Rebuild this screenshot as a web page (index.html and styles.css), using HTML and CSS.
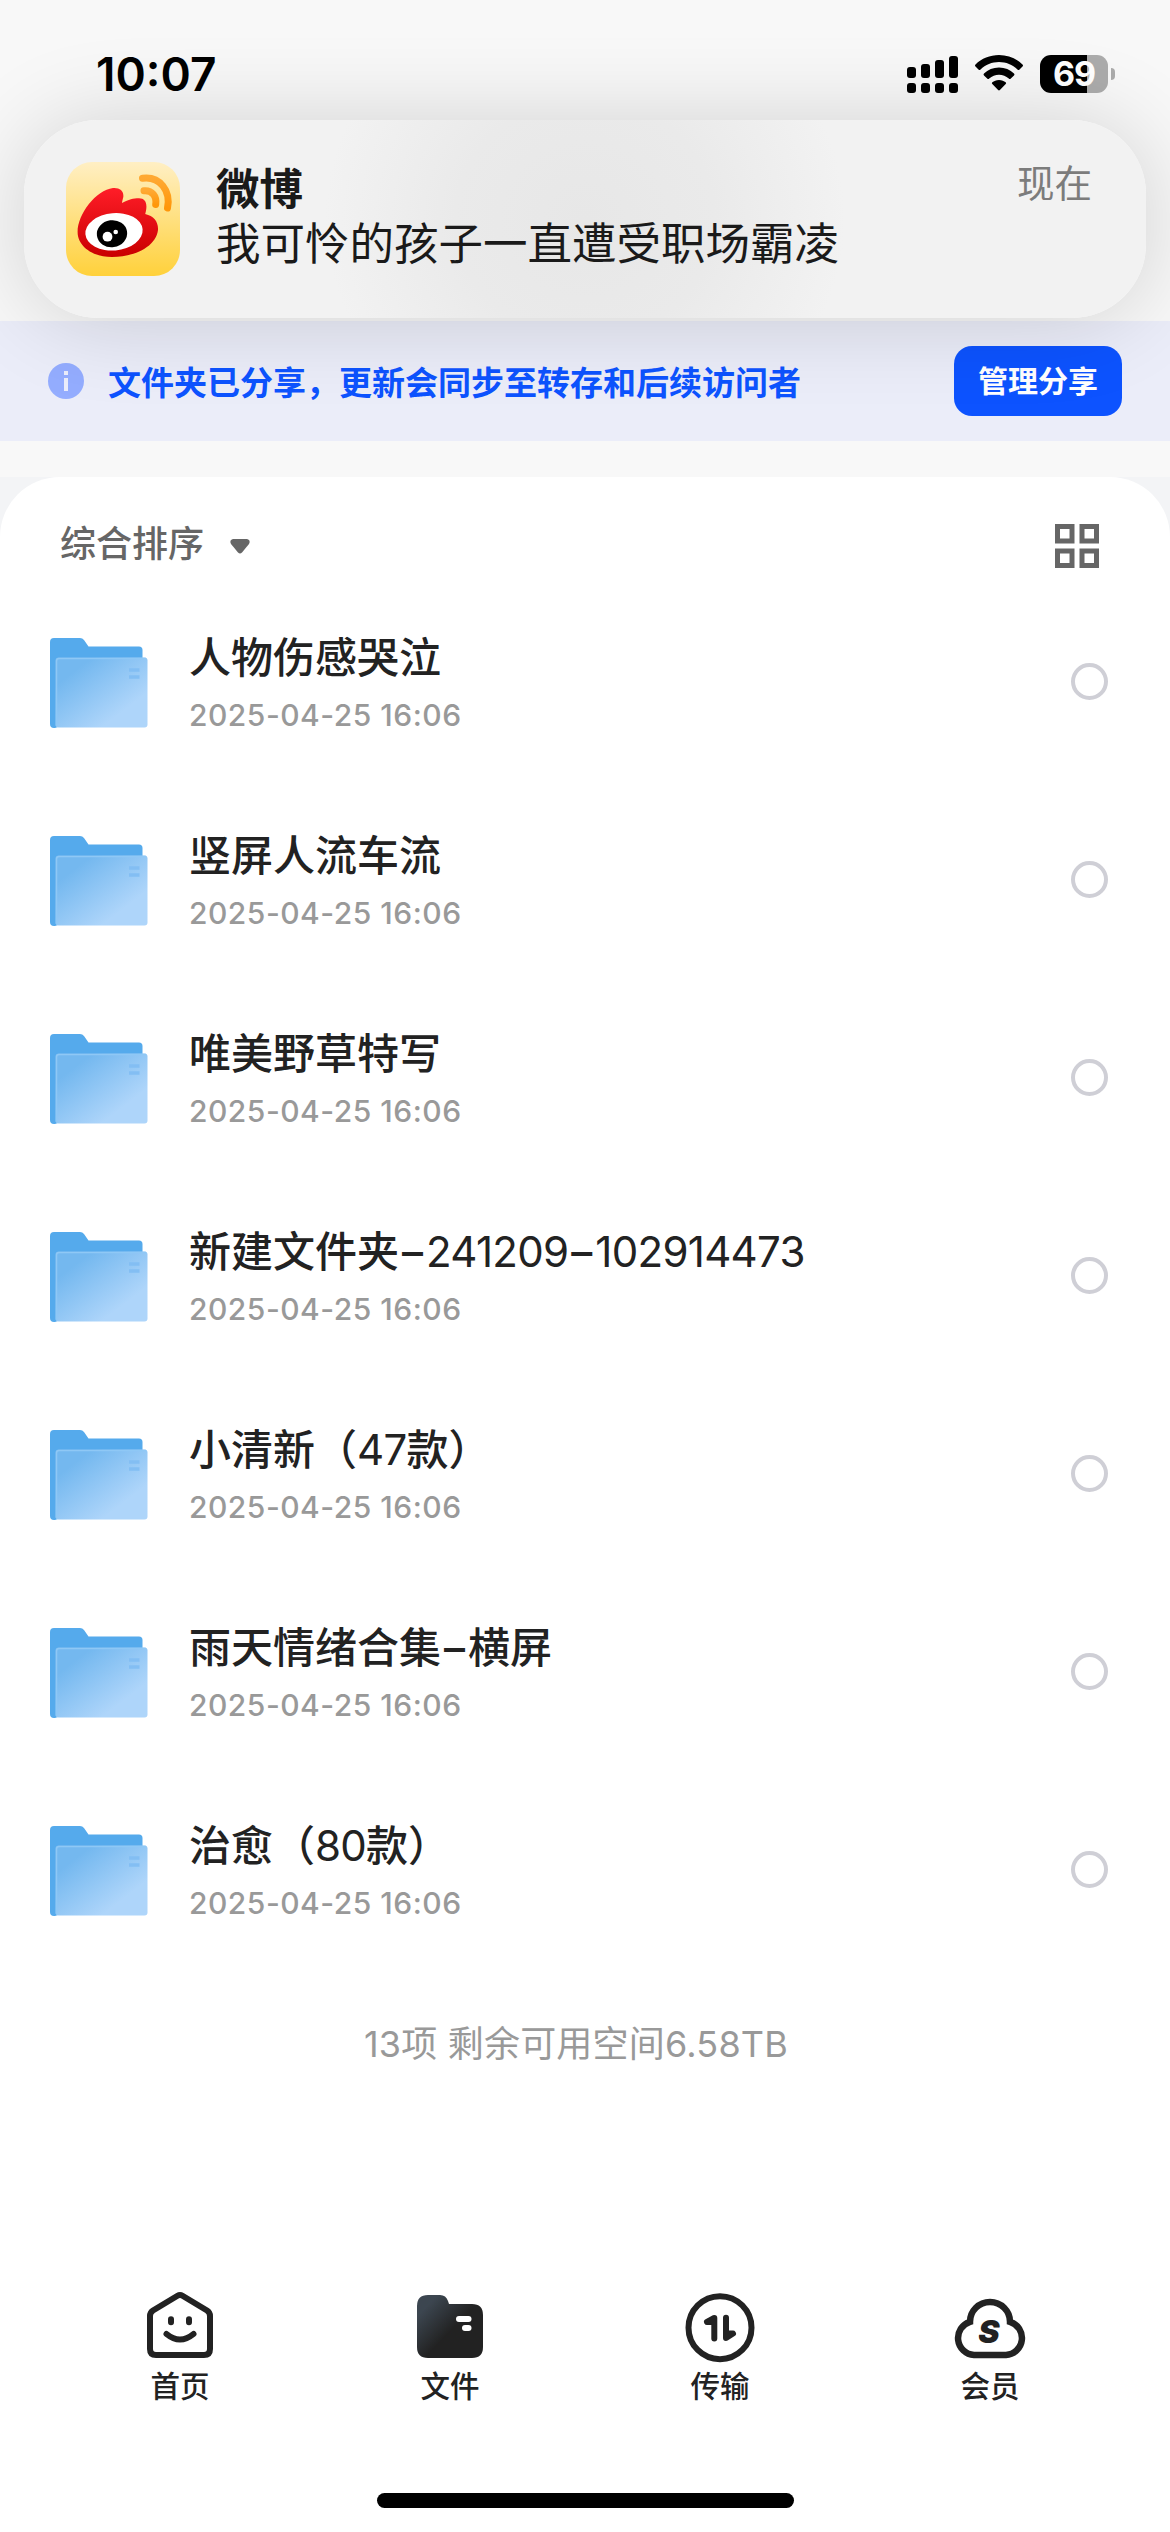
FILE: index.html
```html
<!DOCTYPE html>
<html lang="zh-CN">
<head>
  <meta charset="UTF-8" />
  <meta name="viewport" content="width=device-width, initial-scale=1.0"/>
  <title>文件</title>
  <link rel="stylesheet" href="styles.css">
</head>
<body>
  <!-- shared icons -->
  <svg class="sprite" width="0" height="0">
    <defs>
      <linearGradient id="folder-front" x1="0" y1="0" x2="1" y2="1">
        <stop offset="0.2" stop-color="#74b8ef"/>
        <stop offset="0.75" stop-color="#aed5fa"/>
      </linearGradient>
      <linearGradient id="tab-folder" x1="0" y1="0.1" x2="0.6" y2="0.65">
        <stop offset="0.2" stop-color="#3c4650"/>
        <stop offset="0.85" stop-color="#222"/>
      </linearGradient>
      <linearGradient id="weibo-red" x1="0" y1="0" x2="0" y2="1">
        <stop offset="0" stop-color="#ff1d28"/>
        <stop offset="1" stop-color="#c90000"/>
      </linearGradient>
      <linearGradient id="weibo-wave" x1="0" y1="0" x2="0" y2="1">
        <stop offset="0" stop-color="#ffa933"/>
        <stop offset="1" stop-color="#ff970a"/>
      </linearGradient>
    </defs>
    <symbol id="folder" viewBox="0 0 98 90">
      <path d="M4 0H30Q32.500 0 34 2L38.500 8.500H89Q92.500 8.500 92.500 12V60L5 90H4Q0 90 0 86V4Q0 0 4 0Z" fill="#55aaec"/>
      <rect x="5.500" y="19.500" width="92" height="70" rx="3" fill="url(#folder-front)"/>
      <path d="M6.500 88V23Q6.500 20.500 9 20.500H96" fill="none" stroke="#8fc8f5" stroke-width="1.500"/>
      <path d="M79 32H89.500M79 39H89.500" stroke="#83bef3" stroke-width="3.500"/>
    </symbol>
  </svg>

  <header class="status-bar">
    <span class="clock">10:07</span>
    <div class="status-icons">
      <svg width="51" height="38" viewBox="0 0 51 38">
        <rect x="0" y="12" width="9" height="11" rx="3"/>
        <rect x="14" y="9" width="9" height="14" rx="3"/>
        <rect x="28" y="5" width="9" height="18" rx="3"/>
        <rect x="42" y="1" width="9" height="22" rx="3"/>
        <rect x="0" y="28" width="9" height="10" rx="3"/>
        <rect x="14" y="28" width="9" height="10" rx="3"/>
        <rect x="28" y="28" width="9" height="10" rx="3"/>
        <rect x="42" y="28" width="9" height="10" rx="3"/>
      </svg>
      <svg class="wifi" width="48" height="36" viewBox="0 0 48 36">
        <path d="M24 0C33 0 41.500 3.500 47.500 9.500Q48.500 10.500 47.500 11.500L44.500 14.500Q43.500 15.500 42.500 14.500C37.500 9.700 31 7 24 7S10.500 9.700 5.500 14.500Q4.500 15.500 3.500 14.500L0.500 11.500Q-0.500 10.500 0.500 9.500C6.500 3.500 15 0 24 0Z"/>
        <path d="M24 12.500C30 12.500 35 14.800 39 18.500Q40 19.500 39 20.500L35.800 23.600Q34.800 24.600 33.800 23.600C31 21.200 27.700 19.800 24 19.800S17 21.200 14.200 23.600Q13.200 24.600 12.200 23.600L9 20.500Q8 19.500 9 18.500C13 14.800 18 12.500 24 12.500Z"/>
        <path d="M24 25C26.800 25 29 26 30.700 27.300Q31.600 28.200 30.700 29.100L24.900 35Q24 35.900 23.100 35L17.300 29.100Q16.400 28.200 17.300 27.300C19 26 21.200 25 24 25Z"/>
      </svg>
      <div class="battery">69</div>
    </div>
  </header>

  <section class="notification">
    <svg class="app-icon" width="114" height="114" viewBox="0 0 114 114">
      <path d="M11.600 70C11.600 52 30 28 47 26C54 25.500 58 29 57.300 35Q56 40 56 41C63 37.500 67 36.300 73 36.300C80 36.500 82 42 79.200 52C88 54 92.500 60 92 68C90 85 68 95 46 95C26 95 11.600 84 11.600 70Z" fill="url(#weibo-red)"/>
      <ellipse cx="48" cy="69.800" rx="28.700" ry="18.700" transform="rotate(-5 48 69.800)" fill="#fff"/>
      <ellipse cx="46" cy="71.700" rx="15.200" ry="13.500" transform="rotate(-8 46 71.700)"/>
      <circle cx="41.500" cy="74.700" r="4.900" fill="#fff"/>
      <circle cx="49.700" cy="70" r="2.300" fill="#fff"/>
      <g fill="none" stroke="url(#weibo-wave)" stroke-width="7" stroke-linecap="round">
        <path d="M76.500 16.300C94 14 105 29 101.500 46"/>
        <path d="M78 28.700C86 28 91 34 89.700 42.500"/>
      </g>
    </svg>
    <div class="message">
      <strong>微博</strong>
      <p>我可怜的孩子一直遭受职场霸凌</p>
    </div>
    <time class="when">现在</time>
  </section>

  <section class="share-bar">
    <svg width="36" height="36" viewBox="0 0 36 36">
      <circle cx="18" cy="18" r="18" fill="#94adff"/>
      <path d="M16 8h4v4h-4zM16 15h4v13h-4z" fill="#ebedfb"/>
    </svg>
    <p>文件夹已分享，更新会同步至转存和后续访问者</p>
    <button class="manage">管理分享</button>
  </section>

  <div class="panel-wrap">
    <main class="panel">
      <div class="toolbar">
        <span>综合排序</span>
        <svg class="caret" width="20" height="15" viewBox="0 0 20 15"><path d="M3 0H17Q21 1 19 5L12 13.500Q10 15.500 8 13.500L1 5Q-1 1 3 0Z" fill="#666"/></svg>
        <svg class="grid-icon" width="44" height="44" viewBox="0 0 44 44" fill="none" stroke="#666" stroke-width="5">
          <rect x="2.500" y="2.500" width="14.500" height="14.500"/>
          <rect x="27" y="2.500" width="14.500" height="14.500"/>
          <rect x="2.500" y="27" width="14.500" height="14.500"/>
          <rect x="27" y="27" width="14.500" height="14.500"/>
        </svg>
      </div>
      <ul class="files">
        <li>
          <svg class="folder"><use href="#folder"/></svg>
          <div class="info"><h2>人物伤感哭泣</h2><p>2025-04-25 16:06</p></div>
          <span class="radio"></span>
        </li>
        <li>
          <svg class="folder"><use href="#folder"/></svg>
          <div class="info"><h2>竖屏人流车流</h2><p>2025-04-25 16:06</p></div>
          <span class="radio"></span>
        </li>
        <li>
          <svg class="folder"><use href="#folder"/></svg>
          <div class="info"><h2>唯美野草特写</h2><p>2025-04-25 16:06</p></div>
          <span class="radio"></span>
        </li>
        <li>
          <svg class="folder"><use href="#folder"/></svg>
          <div class="info"><h2>新建文件夹<span class="dash">–</span><span class="num">241209</span><span class="dash">–</span><span class="num">102914473</span></h2><p>2025-04-25 16:06</p></div>
          <span class="radio"></span>
        </li>
        <li>
          <svg class="folder"><use href="#folder"/></svg>
          <div class="info"><h2>小清新（<span class="num">47</span>款）</h2><p>2025-04-25 16:06</p></div>
          <span class="radio"></span>
        </li>
        <li>
          <svg class="folder"><use href="#folder"/></svg>
          <div class="info"><h2>雨天情绪合集<span class="dash">–</span>横屏</h2><p>2025-04-25 16:06</p></div>
          <span class="radio"></span>
        </li>
        <li>
          <svg class="folder"><use href="#folder"/></svg>
          <div class="info"><h2>治愈（<span class="num">80</span>款）</h2><p>2025-04-25 16:06</p></div>
          <span class="radio"></span>
        </li>
      </ul>
      <p class="summary">13项 剩余可用空间6.58TB</p>
    </main>
  </div>

  <nav class="tabs">
    <a>
      <svg width="72" height="72" viewBox="0 0 72 72" fill="none" stroke="#222" stroke-width="6" stroke-linecap="round">
        <path d="M33.500 5.800Q36 4.300 38.500 5.800L63 20.500Q66 22.500 66 26V59Q66 65 60 65H12Q6 65 6 59V26Q6 22.500 9 20.500Z"/>
        <path d="M27 29.200V32.200M45 29.200V32.200"/>
        <path d="M22.500 44Q36 55 49.500 44"/>
      </svg>
      <span>首页</span>
    </a>
    <a>
      <svg width="72" height="72" viewBox="0 0 72 72">
        <path d="M14 5H26Q32 5 34 11L35 14H58Q69 14 69 25V57Q69 68 58 68H14Q3 68 3 57V16Q3 5 14 5Z" fill="url(#tab-folder)"/>
        <rect x="42" y="26" width="15.500" height="6" rx="3" fill="#fff"/>
        <rect x="48" y="35" width="9.500" height="6" rx="3" fill="#fff"/>
      </svg>
      <span>文件</span>
    </a>
    <a>
      <svg width="72" height="72" viewBox="0 0 72 72" fill="none" stroke="#222" stroke-width="6" stroke-linecap="round" stroke-linejoin="round">
        <circle cx="36" cy="37.700" r="31.500"/>
        <path d="M30.300 48.500V28L23 32H30.300M42 27.700V48L49 43.500H42"/>
      </svg>
      <span>传输</span>
    </a>
    <a>
      <svg width="72" height="72" viewBox="0 0 72 72">
        <path d="M20 65A17 17 0 0 1 16 31.800A20 19.800 0 1 1 56 31.800A17 17 0 0 1 52 65Z" fill="none" stroke="#222" stroke-width="6.500"/>
        <text class="cloud-s" x="35" y="53" text-anchor="middle">S</text>
      </svg>
      <span>会员</span>
    </a>
  </nav>
  <div class="home-indicator"></div>
</body>
</html>
```

FILE: styles.css
```css
* { box-sizing: border-box; margin: 0; padding: 0; }
body { display: flex; flex-direction: column; width: 1170px; height: 2532px; overflow: hidden; background: linear-gradient(#f8f8f8 477px, #fff 477px); font-family: Inter, "Noto Sans CJK SC", sans-serif; color: #222; }
svg { display: block; flex: none; overflow: visible; }
.sprite { position: absolute; }

.status-bar { display: flex; justify-content: space-between; align-items: flex-start; flex: none; height: 120px; padding: 55px 62px 0 96px; color: #000; }
.clock { font-size: 46px; line-height: 39px; font-weight: 600; }
.status-icons { display: flex; }
.status-icons .wifi { margin-left: 17px; }
.battery { position: relative; width: 68px; height: 38px; margin-left: 17px; border-radius: 11px; background: linear-gradient(90deg, #000 47px, #acacac 47px); color: #fff; font-size: 34px; line-height: 38px; font-weight: 700; text-align: center; letter-spacing: -1px; }
.battery::after { content: ""; position: absolute; right: -7px; top: 13px; width: 4px; height: 12px; border-radius: 0 4px 4px 0; background: #acacac; }

.notification { position: relative; z-index: 1; display: flex; flex: none; height: 198px; margin: 0 24px; padding: 42px 54px 0 42px; border-radius: 74px; background: radial-gradient(ellipse 260px 240px at 50% 50%, #e7e7e7, #eaeaea 50%, #f2f2f2 100%); box-shadow: 0 2px 90px rgba(0,0,0,0.16); color: #1a1a1a; }
.app-icon { border-radius: 26px; background: linear-gradient(#ffefc4, #ffd13b); }
.message { margin-left: 36px; flex: 1; font-size: 44.5px; line-height: 54px; white-space: nowrap; }
.message strong { display: block; font-size: 43.5px; font-weight: 600; }
.message p { margin-top: 1px; }
.when { margin-top: 1px; font-size: 37.5px; line-height: 42px; color: #7c7c7c; }

.share-bar { display: flex; align-items: center; flex: none; height: 120px; margin-top: 3px; padding: 0 48px; background: #ebedf9; color: #0d53ff; }
.share-bar p { flex: 1; margin: 4px 0 0 24px; font-size: 33px; line-height: 46px; font-weight: 600; white-space: nowrap; }
.manage { width: 168px; height: 70px; border: 0; border-radius: 18px; background: #0d53ff; color: #fff; font: bold 30px/70px Inter, "Noto Sans CJK SC", sans-serif; }

.panel-wrap { margin-top: 36px; background: linear-gradient(#f3f4f6 60px, #fff 60px); }
.panel { padding-top: 31px; border-radius: 60px 60px 0 0; background: #fff; }
.toolbar { display: flex; align-items: center; height: 74px; padding: 0 71px 0 60px; font-size: 36px; line-height: 50px; font-weight: 500; color: #666; }
.toolbar span { margin-bottom: 2px; }
.caret { margin: 3px 0 0 26px; }
.grid-icon { margin: 1px 0 0 auto; }
.files { list-style: none; }
.files li { display: flex; align-items: center; height: 198px; padding: 0 62px 0 50px; }
.folder { width: 98px; height: 90px; margin-top: 3px; }
.info { flex: 1; margin: 3px 0 0 41px; }
.info h2 { font-size: 42px; line-height: 50px; font-weight: 500; white-space: nowrap; }
.info p { margin-top: 14px; font-size: 30px; line-height: 36px; font-weight: 500; letter-spacing: 0.5px; color: #999; }
.num { font-weight: 400; letter-spacing: -0.7px; }
.dash { display: inline-block; width: 27px; text-align: center; }
.radio { width: 37px; height: 37px; border: 4px solid #cfcfd6; border-radius: 50%; }
.summary { margin: 46px 0 0 -18px; font-size: 36px; line-height: 60px; text-align: center; letter-spacing: 0.2px; color: #999; }

.tabs { display: flex; flex: none; margin-top: auto; padding: 0 45px; }
.tabs a { display: flex; flex-direction: column; align-items: center; width: 270px; font-size: 29.5px; line-height: 34px; font-weight: 500; }
.tabs span { margin: 7px 0 1px; }
.cloud-s { font: italic 900 32px Inter, sans-serif; fill: #222; }
.home-indicator { flex: none; width: 417px; height: 15px; margin: 89px auto 24px; border-radius: 8px; background: #000; }
```
